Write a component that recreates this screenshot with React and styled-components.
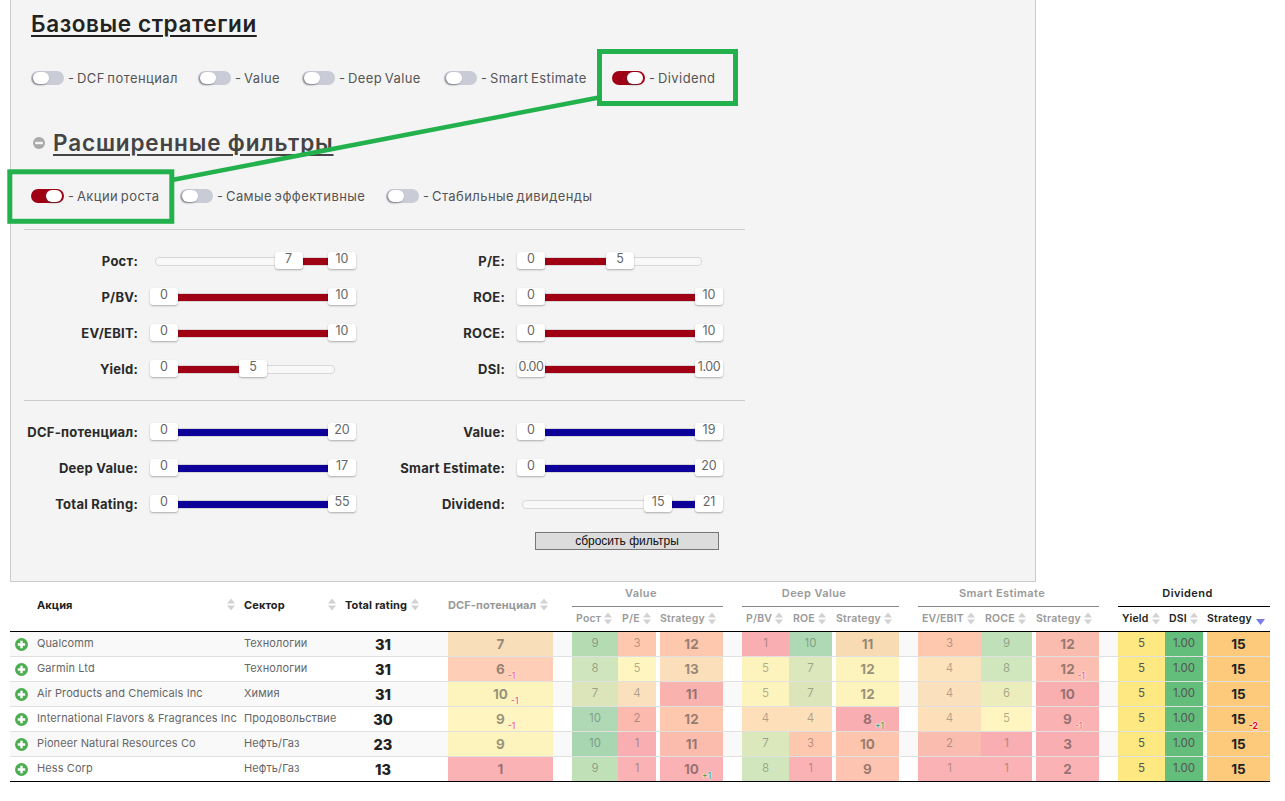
import React from 'react';
import styled, { createGlobalStyle } from 'styled-components';

const SANS = '"Inter", "Noto Sans", "Liberation Sans", sans-serif';
const COLUMNS = '27px 207px 101px 103px 105px 19px 46px 38px 4px 63px 19px 47px 43px 4px 63px 19px 63px 51px 4px 63px 19px 47px 38px 4px 63px';

const Global = createGlobalStyle`
  html, body { margin: 0; padding: 0; background: #fff; }
  body { font-family: ${SANS}; overflow: hidden; }
`;

const Page = styled.div`
  position: relative;
  width: 1285px;
  height: 801px;
  padding-left: 10px;
  box-sizing: border-box;
`;

const Annotation = styled.svg`
  position: absolute;
  left: 0;
  top: 0;
  pointer-events: none;
`;

const Panel = styled.section`
  width: 1026px;
  height: 582px;
  box-sizing: border-box;
  background: #f4f4f4;
  border: 1px solid #ccc;
  border-top: 0;
  padding: 8px 0 0 20px;
`;

const Title = styled.h2`
  display: flex;
  align-items: center;
  margin: 0;
  height: 32px;
  font-size: 22.5px;
  line-height: 32px;
  font-weight: 600;
  color: ${(p) => p.$muted ? '#444' : '#222'};
  letter-spacing: ${(p) => p.$muted ? '0.85px' : '0.6px'};
  text-decoration: underline;
  text-underline-offset: 3px;
  text-decoration-thickness: 2px;
`;

const AdvancedTitle = styled(Title)`
  margin-top: 42px;
  padding-left: 2px;
  gap: 8px;
`;

const Options = styled.div`
  display: flex;
  align-items: center;
  height: 14px;
  margin-top: ${(p) => p.$top}px;
`;

const Option = styled.label`
  display: flex;
  align-items: center;
  gap: 4px;
  width: ${(p) => p.$w}px;
  flex: none;
  font-size: 13px;
  color: #555;
  letter-spacing: 0.42px;
  word-spacing: -1.5px;
  white-space: nowrap;
`;

const Toggle = styled.span`
  position: relative;
  flex: none;
  width: 33px;
  height: 14px;
  border-radius: 7px;
  background: ${(p) => p.$on ? '#a00014' : '#c9ccd6'};
`;

const Thumb = styled.span`
  position: absolute;
  top: 1px;
  left: ${(p) => p.$on ? '15px' : '2px'};
  width: 16px;
  height: 12px;
  border-radius: 6px;
  background: #fff;
  box-shadow: -1px 1px 2px rgba(60, 60, 70, 0.55);
`;

const Filters = styled.div`
  width: 721px;
  margin: 0 0 0 -7px;
`;

const Divider = styled.hr`
  margin: ${(p) => p.$top}px 0 22px;
  border: 0;
  border-top: 1px solid #ccc;
  height: 0;
`;

const SliderGrid = styled.div`
  display: grid;
  grid-template-columns: 332px 332px;
  column-gap: 35px;
  row-gap: 18px;
`;

const SliderRow = styled.div`
  display: flex;
  align-items: center;
  gap: 12px;
  height: 18px;
`;

const SliderLabel = styled.span`
  width: 114px;
  flex: none;
  text-align: right;
  font-size: 13px;
  font-weight: 700;
  color: #2a2a2a;
  letter-spacing: 0.25px;
  white-space: nowrap;
`;

const SliderBody = styled.div`
  position: relative;
  width: 206px;
  height: 18px;
  flex: none;
`;

const Track = styled.div`
  position: absolute;
  left: 5px;
  top: 5px;
  width: 180px;
  height: 9px;
  box-sizing: border-box;
  background: #f8f8f8;
  border: 1px solid #d8d8d8;
  border-radius: 4px;
`;

const Fill = styled.div`
  position: absolute;
  top: 6px;
  height: 7px;
  background: ${(p) => p.$color};
  box-shadow: 0 0 0 1px #d8d8d8;
`;

const Handle = styled.div`
  position: absolute;
  top: 0;
  width: 28px;
  height: 17px;
  background: #fff;
  border-radius: 3px;
  box-shadow: 0 1px 2px rgba(0, 0, 0, 0.3);
  font-size: 12.5px;
  line-height: 13px;
  text-align: center;
  color: #666;
  letter-spacing: ${(p) => p.$tight ? '-0.4px' : '0'};
`;

const ResetRow = styled.div`
  display: flex;
  justify-content: flex-end;
  padding-right: 26px;
  margin-top: 19px;
`;

const ResetButton = styled.button`
  width: 184px;
  height: 18px;
  box-sizing: border-box;
  padding: 0;
  background: #dcdcdc;
  border: 1px solid #767676;
  font-family: "Liberation Sans", Arial, sans-serif;
  font-size: 12px;
  color: #111;
`;

const Table = styled.div`
  width: 1260px;
`;

const Head = styled.div`
  display: grid;
  grid-template-columns: ${COLUMNS};
  grid-template-rows: 25px 24px;
  height: 50px;
  box-sizing: border-box;
  border-bottom: 1px solid #000;
`;

const HeadCell = styled.div`
  display: flex;
  align-items: center;
  gap: 4px;
  grid-row: 1 / 3;
  grid-column: ${(p) => p.$col};
  padding-bottom: 4px;
  font-size: 11px;
  font-weight: 700;
  white-space: nowrap;
  letter-spacing: 0.1px;
  color: ${(p) => p.$muted ? '#999' : '#222'};
  justify-content: ${(p) => p.$between ? 'space-between' : 'flex-start'};
  padding-right: ${(p) => p.$between ? '9px' : '0'};
`;

const GroupCell = styled.div`
  grid-row: 1;
  grid-column: ${(p) => p.$col};
  border-bottom: 1px solid ${(p) => p.$muted ? '#888' : '#000'};
  padding-right: 13px;
  text-align: center;
  font-size: 11px;
  line-height: 23px;
  font-weight: 600;
  letter-spacing: 0.4px;
  color: ${(p) => p.$muted ? '#999' : '#222'};
`;

const SubCell = styled.div`
  grid-row: 2;
  grid-column: ${(p) => p.$col};
  display: flex;
  align-items: center;
  gap: ${(p) => p.$gap ?? 3}px;
  padding-left: ${(p) => p.$flush ? 0 : 4}px;
  padding-bottom: 2px;
  font-size: 10.5px;
  font-weight: 600;
  white-space: nowrap;
  letter-spacing: 0.2px;
  color: ${(p) => p.$muted ? '#999' : '#222'};
`;

const Sort = styled.svg`
  flex: none;
  margin-top: ${(p) => p.$active ? 7 : 0}px;
`;

const Row = styled.div`
  display: grid;
  grid-template-columns: ${COLUMNS};
  height: 25px;
  box-sizing: border-box;
  background: ${(p) => p.$odd ? '#f9f9f9' : '#fff'};
  border-bottom: 1px solid ${(p) => p.$last ? '#000' : '#e0e0e0'};
`;

const IconCell = styled.div`
  display: flex;
  align-items: center;
  padding: 1px 0 0 5px;
`;

const TextCell = styled.div`
  display: flex;
  align-items: center;
  padding-bottom: 2px;
  font-size: 11px;
  letter-spacing: 0.1px;
  color: #666;
  white-space: nowrap;
`;

const TotalCell = styled.div`
  display: flex;
  align-items: center;
  justify-content: center;
  padding-right: 27px;
  font-size: 14.5px;
  font-weight: 800;
  color: #222;
`;

const GapCell = styled.div`
  background: ${(p) => p.$white ? '#fff' : 'transparent'};
`;

const Metric = styled.div`
  display: flex;
  align-items: center;
  justify-content: center;
  background: ${(p) => p.$bg};
  font-size: ${(p) => p.$strong ? '13.5px' : '11.5px'};
  font-weight: ${(p) => p.$strong ? 700 : 400};
  padding-bottom: ${(p) => p.$strong ? 1 : 2}px;
  color: ${(p) => p.$active
    ? (p.$strong ? '#222' : '#555')
    : (p.$strong ? 'rgba(50,50,50,.5)' : 'rgba(50,50,50,.38)')};
`;

const Num = styled.span`
  position: relative;
`;

const Delta = styled.span`
  position: absolute;
  left: calc(100% + 3px);
  top: 10px;
  font-size: 8.5px;
  line-height: 10px;
  font-weight: ${(p) => p.$bold ? 700 : 500};
  color: ${(p) => p.$plus ? '#3f9a4a' : (p.$bold ? '#e3001b' : '#f4566a')};
  text-shadow: 0 0 2px #fff, 0 0 2px #fff, 0 0 1px #fff;
  white-space: nowrap;
`;

const SortIcon = ({ active }) => active ? (
  <Sort $active width="9" height="6" viewBox="0 0 9 6"><path d="M0 0h9L4.5 6z" fill="#7b7be6" /></Sort>
) : (
  <Sort width="8" height="13" viewBox="0 0 8 13">
    <path d="M0 5.6 4 .4l4 5.2z" fill="#d2d2d2" />
    <path d="M0 7.4h8L4 12.6z" fill="#d2d2d2" />
  </Sort>
);

const PlusIcon = () => (
  <svg width="13" height="13" viewBox="0 0 13 13">
    <circle cx="6.5" cy="6.5" r="6.5" fill="#4cae50" />
    <path d="M2.8 5.3h2.5V2.8h2.4v2.5h2.5v2.4H7.7v2.5H5.3V7.7H2.8z" fill="#fff" />
  </svg>
);

const MinusIcon = () => (
  <svg width="12" height="12" viewBox="0 0 12 12" style={{ flex: 'none' }}>
    <circle cx="6" cy="6" r="6" fill="#aaa" />
    <rect x="2.2" y="4.8" width="7.6" height="2.4" fill="#f4f4f4" />
  </svg>
);

const RED = '#a00014';
const BLUE = '#0c0099';
const RANGE = 178;

const RangeSlider = ({ label, low, high, from = 0, to = 1, color, tight }) => {
  const leftPx = from * RANGE;
  const rightPx = to * RANGE;
  return (
    <SliderRow>
      <SliderLabel>{label}</SliderLabel>
      <SliderBody>
        <Track />
        <Fill $color={color} style={{ left: leftPx + 28, width: rightPx - leftPx - 28 }} />
        <Handle $tight={tight} style={{ left: leftPx }}>{low}</Handle>
        <Handle $tight={tight} style={{ left: rightPx }}>{high}</Handle>
      </SliderBody>
    </SliderRow>
  );
};

const ToggleOption = ({ on, w, children }) => (
  <Option $w={w}>
    <Toggle $on={on}><Thumb $on={on} /></Toggle>
    {children}
  </Option>
);

const m = (v, bg, delta) => ({ v, bg, delta });

const ROWS = [
  { name: 'Qualcomm', sector: 'Технологии', total: 31, dcf: m(7, '#f9dfb9'),
    value: [m(9, '#b5dbb2'), m(3, '#fdc8ae'), m(12, '#fdc8ae')],
    deep: [m(1, '#f9aeb2'), m(10, '#aed9b4'), m(11, '#f9dbb3')],
    smart: [m(3, '#fdc8ae'), m(9, '#bfe0b8'), m(12, '#fbbcb0')],
    div: [m(5, '#fee881'), m('1.00', '#63bd7b'), m(15, '#fdc97b')] },
  { name: 'Garmin Ltd', sector: 'Технологии', total: 31, dcf: m(6, '#fecfb6', '-1'),
    value: [m(8, '#cfe5bd'), m(5, '#fef5c0'), m(13, '#fbdfba')],
    deep: [m(5, '#fdf3bd'), m(7, '#dce8bc'), m(12, '#fdf3bd')],
    smart: [m(4, '#fde3bb'), m(8, '#d0e6bd'), m(12, '#fbbeb0', '-1')],
    div: [m(5, '#fee881'), m('1.00', '#63bd7b'), m(15, '#fdc97b')] },
  { name: 'Air Products and Chemicals Inc', sector: 'Химия', total: 31, dcf: m(10, '#fdf3bd', '-1'),
    value: [m(7, '#dce5b9'), m(4, '#fae0bc'), m(11, '#fab2ae')],
    deep: [m(5, '#fdf3bd'), m(7, '#dce5b9'), m(12, '#fdf3bd')],
    smart: [m(4, '#fae0bc'), m(6, '#ebedbd'), m(10, '#f9aeb0')],
    div: [m(5, '#fee881'), m('1.00', '#63bd7b'), m(15, '#fdc97b')] },
  { name: 'International Flavors & Fragrances Inc', sector: 'Продовольствие', total: 30, dcf: m(9, '#fef5c0', '-1'),
    value: [m(10, '#aed9b4'), m(2, '#fcb9ae'), m(12, '#fdc8ae')],
    deep: [m(4, '#fde0ba'), m(4, '#fde0ba'), m(8, '#f9aeb2', '+1')],
    smart: [m(4, '#fde0ba'), m(5, '#fef5c0'), m(9, '#fab2b2', '-1')],
    div: [m(5, '#fee881'), m('1.00', '#63bd7b'), m(15, '#fdc97b', '-2')] },
  { name: 'Pioneer Natural Resources Co', sector: 'Нефть/Газ', total: 23, dcf: m(9, '#fdf3bd'),
    value: [m(10, '#a8d6b0'), m(1, '#f9aeb2'), m(11, '#fbbcae')],
    deep: [m(7, '#dbe8bc'), m(3, '#fdc8ae'), m(10, '#fdc4ae')],
    smart: [m(2, '#fbbcb0'), m(1, '#f9aeb2'), m(3, '#f9aeb2')],
    div: [m(5, '#fee881'), m('1.00', '#63bd7b'), m(15, '#fdc97b')] },
  { name: 'Hess Corp', sector: 'Нефть/Газ', total: 13, dcf: m(1, '#fbb2b4'),
    value: [m(9, '#c0e1b8'), m(1, '#fbb2b4'), m(10, '#fbb2b4', '+1')],
    deep: [m(8, '#d1e6bc'), m(1, '#fbb2b4'), m(9, '#fdc4b2')],
    smart: [m(1, '#fbb2b4'), m(1, '#fbb2b4'), m(2, '#fbb2b4')],
    div: [m(5, '#fee881'), m('1.00', '#63bd7b'), m(15, '#fdc97b')] },
];

const Score = ({ cell, strong, active }) => (
  <Metric $bg={cell.bg} $strong={strong} $active={active}>
    <Num>
      {cell.v}
      {cell.delta && (
        <Delta $plus={cell.delta[0] === '+'} $bold={active}>{cell.delta}</Delta>
      )}
    </Num>
  </Metric>
);

const Group = ({ cells, active }) => (
  <>
    <GapCell />
    <Score cell={cells[0]} active={active} />
    <Score cell={cells[1]} active={active} />
    <GapCell $white />
    <Score cell={cells[2]} strong active={active} />
  </>
);

const SUBHEADS = [
  { label: 'Value', col: '7 / 11', items: [['Рост', 7], ['P/E', 8], ['Strategy', 10, true]] },
  { label: 'Deep Value', col: '12 / 16', items: [['P/BV', 12], ['ROE', 13], ['Strategy', 15, true]] },
  { label: 'Smart Estimate', col: '17 / 21', items: [['EV/EBIT', 17], ['ROCE', 18], ['Strategy', 20, true]] },
];

export default function App() {
  return (
    <Page>
      <Global />
      <Panel>
        <Title>Базовые стратегии</Title>
        <Options $top={31}>
          <ToggleOption w={167}>- DCF потенциал</ToggleOption>
          <ToggleOption w={104}>- Value</ToggleOption>
          <ToggleOption w={142}>- Deep Value</ToggleOption>
          <ToggleOption w={168}>- Smart Estimate</ToggleOption>
          <ToggleOption on w={130}>- Dividend</ToggleOption>
        </Options>
        <AdvancedTitle $muted><MinusIcon />Расширенные фильтры</AdvancedTitle>
        <Options $top={30}>
          <ToggleOption on w={149}>- Акции роста</ToggleOption>
          <ToggleOption w={206}>- Самые эффективные</ToggleOption>
          <ToggleOption w={220}>- Стабильные дивиденды</ToggleOption>
        </Options>
        <Filters>
          <Divider $top={26} />
          <SliderGrid>
            <RangeSlider label="Рост:" low="7" high="10" from={0.7} color={RED} />
            <RangeSlider label="P/E:" low="0" high="5" to={0.5} color={RED} />
            <RangeSlider label="P/BV:" low="0" high="10" color={RED} />
            <RangeSlider label="ROE:" low="0" high="10" color={RED} />
            <RangeSlider label="EV/EBIT:" low="0" high="10" color={RED} />
            <RangeSlider label="ROCE:" low="0" high="10" color={RED} />
            <RangeSlider label="Yield:" low="0" high="5" to={0.5} color={RED} />
            <RangeSlider label="DSI:" low="0.00" high="1.00" color={RED} tight />
          </SliderGrid>
          <Divider $top={22} />
          <SliderGrid>
            <RangeSlider label="DCF-потенциал:" low="0" high="20" color={BLUE} />
            <RangeSlider label="Value:" low="0" high="19" color={BLUE} />
            <RangeSlider label="Deep Value:" low="0" high="17" color={BLUE} />
            <RangeSlider label="Smart Estimate:" low="0" high="20" color={BLUE} />
            <RangeSlider label="Total Rating:" low="0" high="55" color={BLUE} />
            <RangeSlider label="Dividend:" low="15" high="21" from={15 / 21} color={BLUE} />
          </SliderGrid>
          <ResetRow><ResetButton>сбросить фильтры</ResetButton></ResetRow>
        </Filters>
      </Panel>

      <Table>
        <Head>
          <HeadCell $col="2" $between><span>Акция</span><SortIcon /></HeadCell>
          <HeadCell $col="3" $between><span>Сектор</span><SortIcon /></HeadCell>
          <HeadCell $col="4"><span>Total rating</span><SortIcon /></HeadCell>
          <HeadCell $col="5" $muted><span>DCF-потенциал</span><SortIcon /></HeadCell>
          {SUBHEADS.map((g) => (
            <React.Fragment key={g.label}>
              <GroupCell $col={g.col} $muted>{g.label}</GroupCell>
              {g.items.map(([t, col, flush]) => (
                <SubCell key={col} $col={col} $flush={flush} $muted>
                  <span>{t}</span><SortIcon />
                </SubCell>
              ))}
            </React.Fragment>
          ))}
          <GroupCell $col="22 / 26">Dividend</GroupCell>
          <SubCell $col="22"><span>Yield</span><SortIcon /></SubCell>
          <SubCell $col="23"><span>DSI</span><SortIcon /></SubCell>
          <SubCell $col="25" $flush $gap={4}><span>Strategy</span><SortIcon active /></SubCell>
        </Head>
        {ROWS.map((r, i) => (
          <Row key={r.name} $odd={i % 2 === 0} $last={i === ROWS.length - 1}>
            <IconCell><PlusIcon /></IconCell>
            <TextCell>{r.name}</TextCell>
            <TextCell>{r.sector}</TextCell>
            <TotalCell>{r.total}</TotalCell>
            <Score cell={r.dcf} strong />
            <Group cells={r.value} />
            <Group cells={r.deep} />
            <Group cells={r.smart} />
            <Group cells={r.div} active />
          </Row>
        ))}
      </Table>

      <Annotation width="1285" height="801" viewBox="0 0 1285 801" fill="none" stroke="#22b14c" strokeWidth="5">
        <rect x="599.5" y="51.5" width="136" height="52" />
        <rect x="9.8" y="171.8" width="162" height="49.5" />
        <line x1="172" y1="180" x2="599" y2="97.5" strokeWidth="4.5" />
      </Annotation>
    </Page>
  );
}
